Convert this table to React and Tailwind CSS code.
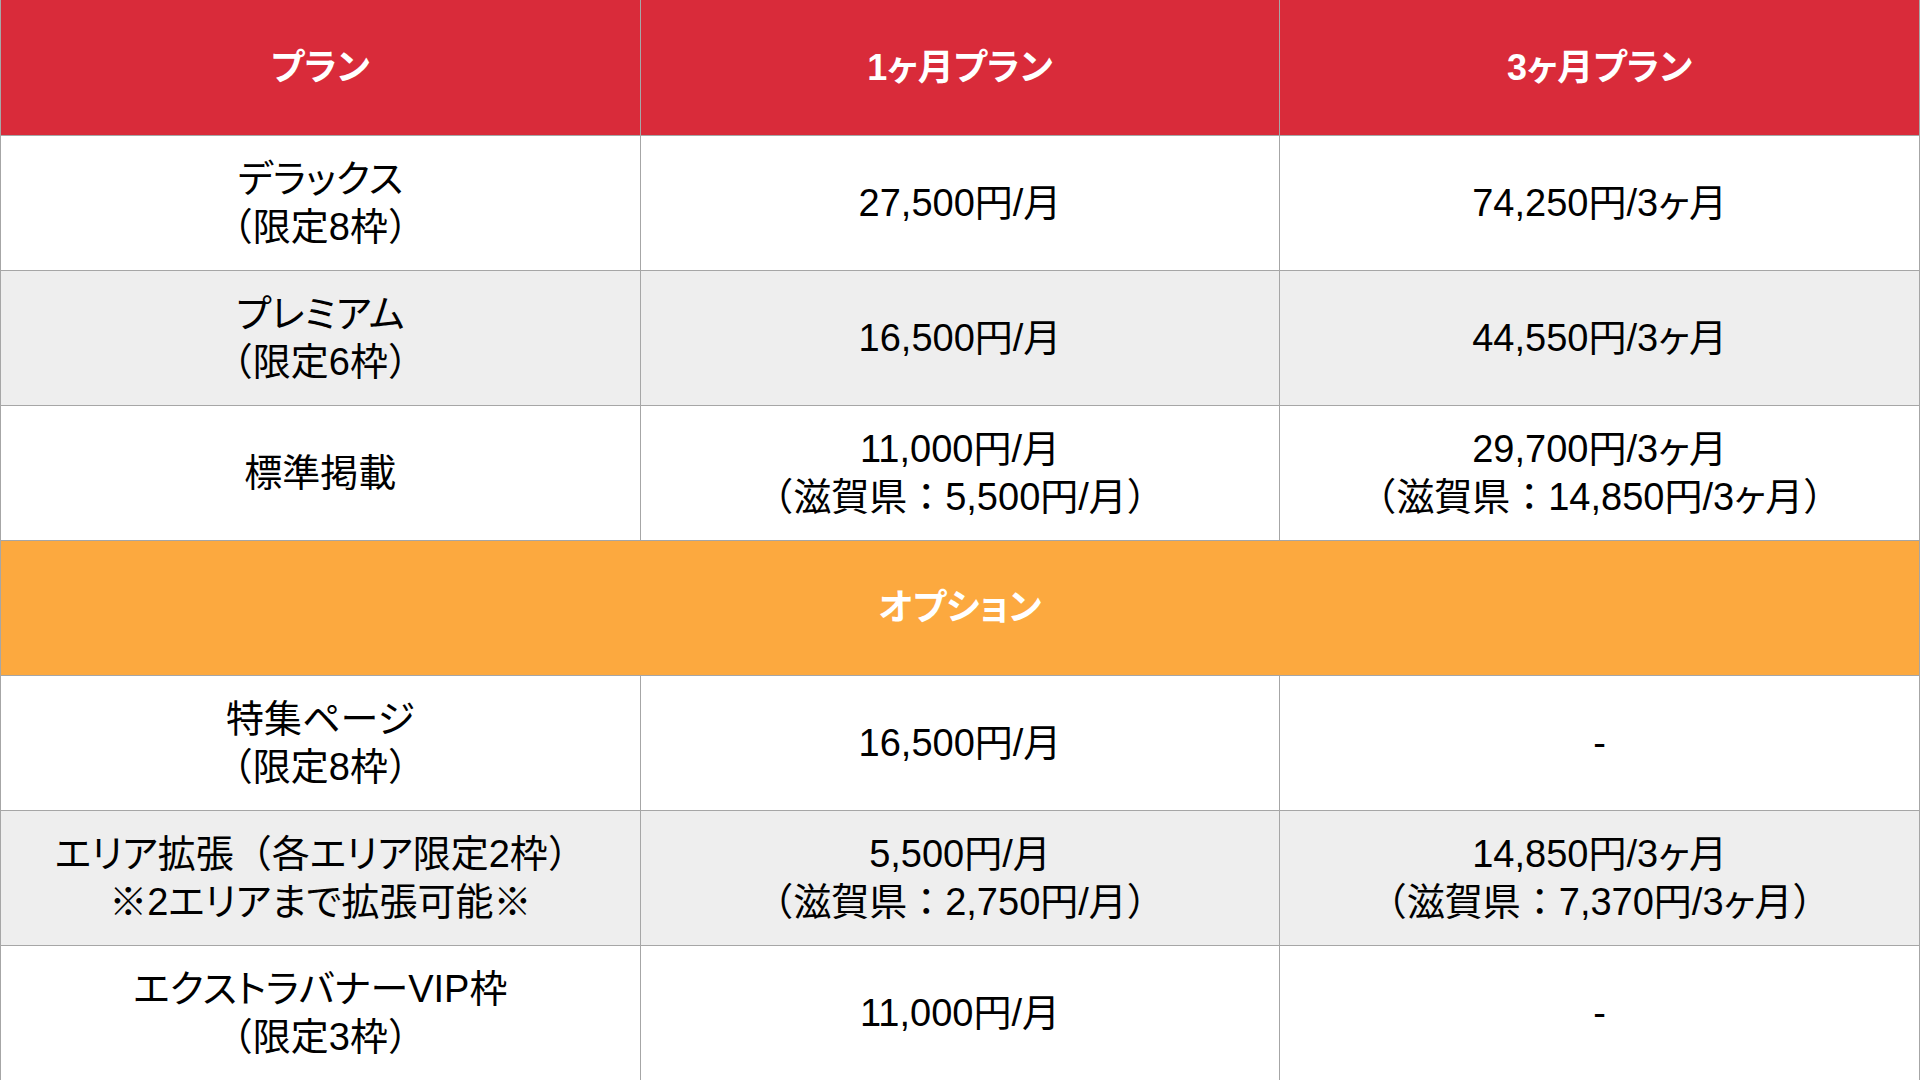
import React from "react";

const rows = [
  { type: "row", bg: "bg-white", cells: [["デラックス", "（限定8枠）"], ["27,500円/月"], ["74,250円/3ヶ月"]] },
  { type: "row", bg: "bg-[#eeeeee]", cells: [["プレミアム", "（限定6枠）"], ["16,500円/月"], ["44,550円/3ヶ月"]] },
  { type: "row", bg: "bg-white", cells: [["標準掲載"], ["11,000円/月", "（滋賀県：5,500円/月）"], ["29,700円/3ヶ月", "（滋賀県：14,850円/3ヶ月）"]] },
  { type: "section", label: "オプション" },
  { type: "row", bg: "bg-white", cells: [["特集ページ", "（限定8枠）"], ["16,500円/月"], ["-"]] },
  { type: "row", bg: "bg-[#eeeeee]", cells: [["エリア拡張（各エリア限定2枠）", "※2エリアまで拡張可能※"], ["5,500円/月", "（滋賀県：2,750円/月）"], ["14,850円/3ヶ月", "（滋賀県：7,370円/3ヶ月）"]] },
  { type: "row", bg: "bg-white", cells: [["エクストラバナーVIP枠", "（限定3枠）"], ["11,000円/月"], ["-"]] },
];

function Line({ text }) {
  const parts = text.split(/([（）：])/).filter((p) => p !== "");
  return (
    <div>
      {parts.map((p, i) =>
        /^[（）：]$/.test(p) ? (
          <span key={i}>{p}</span>
        ) : (
          <span key={i} className="[font-feature-settings:'palt']">{p}</span>
        )
      )}
    </div>
  );
}

export default function App() {
  return (
    <div className="w-[1920px] h-[1080px] overflow-hidden bg-white [font-family:'Liberation_Sans','Noto_Sans_CJK_JP',sans-serif]">
      <table className="w-full border-collapse table-fixed">
        <tbody>
          <tr className="bg-[#d92b3a] h-[135px]">
            {["プラン", "1ヶ月プラン", "3ヶ月プラン"].map((h) => (
              <td key={h} className="border-x border-b border-[#a6a6a6] text-center align-middle text-white font-bold text-[36px] leading-[44px] pt-[2px] [font-feature-settings:'palt']">
                {h}
              </td>
            ))}
          </tr>
          {rows.map((r, i) =>
            r.type === "section" ? (
              <tr key={i} className="bg-[#fca93f] h-[135px]">
                <td colSpan={3} className="border border-[#a6a6a6] text-center align-middle text-white font-bold text-[36px] leading-[44px] [font-feature-settings:'palt']">
                  {r.label}
                </td>
              </tr>
            ) : (
              <tr key={i} className={`${r.bg} h-[135px]`}>
                {r.cells.map((lines, j) => (
                  <td key={j} className="border border-[#a6a6a6] text-center align-middle text-black text-[38px] leading-[48px]">
                    {lines.map((l, k) => (
                      <Line key={k} text={l} />
                    ))}
                  </td>
                ))}
              </tr>
            )
          )}
        </tbody>
      </table>
    </div>
  );
}
